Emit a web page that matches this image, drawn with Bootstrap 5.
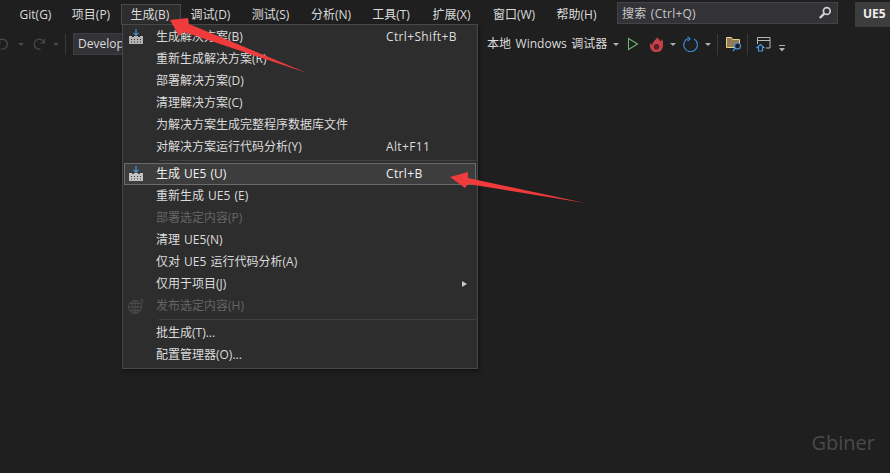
<!DOCTYPE html>
<html lang="zh-CN">
<head>
<meta charset="utf-8">
<title>UE5</title>
<link href="https://cdn.jsdelivr.net/npm/bootstrap@5.3.0/dist/css/bootstrap.min.css" rel="stylesheet">
<style>
html,body{height:100%;margin:0;background:#1f1f1f;overflow:hidden}
body{font:12px/16px "Open Sans","Noto Sans CJK SC",sans-serif;color:#dcdcdc;position:relative;width:890px;height:473px}
.menubar{height:28px;padding-top:4px}
.mitem{height:21px;line-height:19px;color:#dcdcdc;white-space:nowrap;border:1px solid transparent;border-bottom:0;box-sizing:border-box;text-align:center}
.mitem.open{background:#2d2d2d;border-color:#484848;padding-right:2px}
.searchbox{width:221px;height:22px;margin-top:-2px;margin-left:10px;background:#333337;border:1px solid #434346;padding:0 5px 0 4px;color:#c8c8c8;line-height:19px;letter-spacing:.25px;word-spacing:1px}
.uebox{margin-left:17px;width:35px;height:25px;margin-top:-2px;background:#3d3d3d;color:#f1f1f1;font-weight:700;padding-left:8px;line-height:24px}
.toolbar{height:30px;padding-top:2px}
.devbox{width:120px;height:22px;background:#333337;border:1px solid #3f3f42;padding-left:4px;line-height:20px}
.tsep{width:1px;height:21px;background:#3a3a3a}
.dmenu{position:absolute;left:122px;top:24px;width:356px;height:345px;background:#2d2d2d;border:1px solid #484848;box-shadow:1px 2px 4px rgba(0,0,0,.45);padding-top:1px}
.mrow{height:22px;display:flex;align-items:center;padding-left:31px;color:#dcdcdc;border:1px solid transparent;margin:0 1px;white-space:pre;position:relative;word-spacing:1px}
.mrow.hot{background:#3d3d3d;border-color:#6a6a6a;color:#f1f1f1}
.mrow.off{color:#656565}
.keyhint{position:absolute;left:261px;letter-spacing:.35px}
.ico{position:absolute;left:3px;top:2px}
.msep{height:1px;background:#414141;margin:2px 1px 2px 36px}
.subarrow{position:absolute;right:8px;top:7px;width:0;height:0;border-left:5px solid #c8c8c8;border-top:3.5px solid transparent;border-bottom:3.5px solid transparent}
.caretd{width:0;height:0;border-top:3px solid #b0b0b0;border-left:3.5px solid transparent;border-right:3.5px solid transparent;display:inline-block}
.wmark{position:absolute;right:15px;bottom:18px;font-size:20px;line-height:24px;color:#4a4a4a}
.overlay{position:absolute;left:0;top:0;pointer-events:none}
</style>
</head>
<body>
<div class="menubar d-flex align-items-start">
  <div class="mitem" style="width:61px;padding-left:10px">Git(G)</div>
  <div class="mitem" style="width:60px">项目(P)</div>
  <div class="mitem open" style="width:60px">生成(B)</div>
  <div class="mitem" style="width:59px">调试(D)</div>
  <div class="mitem" style="width:61px">测试(S)</div>
  <div class="mitem" style="width:60px">分析(N)</div>
  <div class="mitem" style="width:60px">工具(T)</div>
  <div class="mitem" style="width:61px">扩展(X)</div>
  <div class="mitem" style="width:64px">窗口(W)</div>
  <div class="mitem" style="width:61px">帮助(H)</div>
  <div class="searchbox d-flex justify-content-between align-items-center">
    <span>搜索 (Ctrl+Q)</span>
    <svg width="14" height="14" viewBox="0 0 14 14"><circle cx="8.8" cy="5" r="3.4" fill="none" stroke="#d0d0d0" stroke-width="1.7"/><path d="M6.2 7.6 1.800 12" stroke="#d0d0d0" stroke-width="2.4"/></svg>
  </div>
  <div class="uebox">UE5</div>
</div>
<div class="toolbar d-flex align-items-center">
  <svg width="14" height="14" viewBox="0 0 14 14" style="margin-left:-5px"><path d="M2 2v4h4M2.500 6A5 5 0 1 1 6 12" fill="none" stroke="#4a4a4a" stroke-width="1.200"/></svg>
  <span class="caretd" style="border-top-color:#4a4a4a;margin-left:9px"></span>
  <svg width="15" height="14" viewBox="0 0 14 14" style="margin-left:8px"><path d="M12 2v4H8M11.500 6A5 5 0 1 0 8 12" fill="none" stroke="#4a4a4a" stroke-width="1.200"/></svg>
  <span class="caretd" style="border-top-color:#4a4a4a;margin-left:6px"></span>
  <span class="tsep" style="margin-left:6px"></span>
  <div class="devbox" style="margin-left:7px">Develop</div>
  <span style="margin-left:294px;white-space:nowrap;word-spacing:1.5px">本地 Windows 调试器</span>
  <span class="caretd" style="margin-left:6px"></span>
  <svg width="12" height="14" viewBox="0 0 12 14" style="margin-left:8px"><path d="M1.500 1.500v11l9-5.500z" fill="none" stroke="#6fb36f" stroke-width="1.100"/></svg>
  <svg width="15" height="17" viewBox="0 0 16 17" style="margin-left:10px"><path d="M9 .5c0 2.500 3 2 2.500 4.500 1 0 2-1 2.300-2.500C16 7 16 16.500 8 16.500 2 16.500 0 11 1.500 6.500c.5 1.500 1 2 2 2.500C3.500 6 6.500 4.500 9 .5z" fill="#c8404a"/><circle cx="8" cy="11" r="3" fill="#5a2226"/></svg>
  <span class="caretd" style="margin-left:6px"></span>
  <svg width="16" height="16" viewBox="0 0 16 16" style="margin-left:7px"><path d="M11 3A6.800 6.800 0 1 1 5 2.600M4.600 .6 7 2.800 4.600 5" fill="none" stroke="#3d8fdc" stroke-width="1.100"/></svg>
  <span class="caretd" style="margin-left:6px"></span>
  <span class="tsep" style="margin-left:6px"></span>
  <svg width="16" height="16" viewBox="0 0 16 16" style="margin-left:8px"><path d="M.5 1.500h5l1 2h7v8H.5z" fill="#8f7c55" stroke="#e8cf8f"/><circle cx="11.500" cy="10" r="3" fill="#1f1f1f" stroke="#4a9ae0" stroke-width="1.100"/><path d="M9.300 12.200 7 15" stroke="#4a9ae0" stroke-width="1.300"/></svg>
  <span class="tsep" style="margin-left:5px"></span>
  <svg width="16" height="16" viewBox="0 0 16 16" style="margin-left:8px"><path d="M1.500 8V1.500h12.500V12H10M1.500 4.500H14" fill="none" stroke="#b8b8b8"/><path d="M.5 12 4.500 8.500 8.500 12M2.500 11v4h4v-4" fill="none" stroke="#4a9ae0" stroke-width="1.200"/></svg>
  <svg width="8" height="7" viewBox="0 0 8 7" style="margin-left:6px;margin-top:8px"><path d="M1 .5h6" stroke="#b0b0b0"/><path d="M1 3h6L4 6.500z" fill="#b0b0b0"/></svg>
</div>

<div class="dmenu">
  <div class="mrow"><svg class="ico" width="16" height="16" viewBox="0 0 16 16"><path d="M8 0v6M5.500 3.800 8 6.300l2.500-2.500" fill="none" stroke="#4a9ae0" stroke-width="1.100"/><path d="M1 7h3v1h2V7h4v1h2V7h3v8H1z" fill="#b4b4b4"/><path d="M3 10h1v1H3zM6 10h1v1H6zM9 10h1v1H9zM12 10h1v1h-1zM3 12.500h1v1H3zM6 12.500h1v1H6zM9 12.500h1v1H9zM12 12.500h1v1h-1z" fill="#2d2d2d"/></svg>生成解决方案(B)<span class="keyhint">Ctrl+Shift+B</span></div>
  <div class="mrow">重新生成解决方案(R)</div>
  <div class="mrow">部署解决方案(D)</div>
  <div class="mrow">清理解决方案(C)</div>
  <div class="mrow">为解决方案生成完整程序数据库文件</div>
  <div class="mrow">对解决方案运行代码分析(Y)<span class="keyhint">Alt+F11</span></div>
  <div class="msep"></div>
  <div class="mrow hot"><svg class="ico" width="16" height="16" viewBox="0 0 16 16"><path d="M8 0v6M5.500 3.800 8 6.300l2.500-2.500" fill="none" stroke="#4a9ae0" stroke-width="1.100"/><path d="M1 7h3v1h2V7h4v1h2V7h3v8H1z" fill="#c4c4c4"/><path d="M3 10h1v1H3zM6 10h1v1H6zM9 10h1v1H9zM12 10h1v1h-1zM3 12.500h1v1H3zM6 12.500h1v1H6zM9 12.500h1v1H9zM12 12.500h1v1h-1z" fill="#3d3d3d"/></svg>生成 UE5 (U)<span class="keyhint">Ctrl+B</span></div>
  <div class="mrow">重新生成 UE5 (E)</div>
  <div class="mrow off">部署选定内容(P)</div>
  <div class="mrow">清理 UE5(N)</div>
  <div class="mrow">仅对 UE5 运行代码分析(A)</div>
  <div class="mrow">仅用于项目(J)<span class="subarrow"></span></div>
  <div class="mrow off"><svg class="ico" width="16" height="16" viewBox="0 0 16 16"><g fill="none" stroke="#4c4c4c"><circle cx="7" cy="9" r="6.500"/><path d="M7 2.500v13M.5 9h13M1.500 5.500h11M1.500 12.500h11"/><ellipse cx="7" cy="9" rx="3" ry="6.500"/><path d="M14 6V1M12.500 2.500 14 1l1.500 1.500"/></g></svg>发布选定内容(H)</div>
  <div class="msep"></div>
  <div class="mrow">批生成(T)...</div>
  <div class="mrow">配置管理器(O)...</div>
</div>

<div class="wmark">Gbiner</div>

<svg class="overlay" width="890" height="473" viewBox="0 0 890 473">
  <path d="M170 20 188 18 189 24 307 73 184 32 179 36z" fill="#ef3b3b"/>
  <path d="M450 177 468 172 468 178 585 203 468 184 465 188z" fill="#ef3b3b"/>
</svg>
</body>
</html>
